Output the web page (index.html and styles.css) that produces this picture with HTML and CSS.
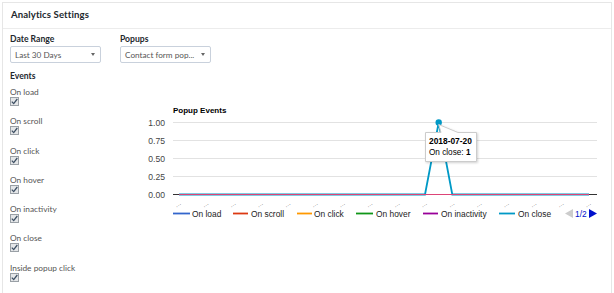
FILE: index.html
```html
<!DOCTYPE html>
<html lang="en">
<head>
<meta charset="utf-8">
<title>Analytics Settings</title>
<link rel="stylesheet" href="styles.css">
</head>
<body>
<div class="panel">
  <div class="panel-header"><h2 class="panel-title">Analytics Settings</h2></div>
  <div class="panel-body">
    <div class="filters">
      <div class="field">
        <div class="field-label">Date Range</div>
        <div class="select"><span class="select-text">Last 30 Days</span><i class="caret"></i></div>
      </div>
      <div class="field">
        <div class="field-label">Popups</div>
        <div class="select"><span class="select-text">Contact form pop...</span><i class="caret"></i></div>
      </div>
    </div>
    <div class="main">
      <div class="events">
        <div class="field-label">Events</div>
        <ul class="event-list">
          <li class="event"><span class="event-name">On load</span><span class="check"><svg viewBox="0 0 7 7" width="7" height="7"><path d="M0.8 3.6 L2.7 5.6 L6.3 1"/></svg></span></li>
          <li class="event"><span class="event-name">On scroll</span><span class="check"><svg viewBox="0 0 7 7" width="7" height="7"><path d="M0.8 3.6 L2.7 5.6 L6.3 1"/></svg></span></li>
          <li class="event"><span class="event-name">On click</span><span class="check"><svg viewBox="0 0 7 7" width="7" height="7"><path d="M0.8 3.6 L2.7 5.6 L6.3 1"/></svg></span></li>
          <li class="event"><span class="event-name">On hover</span><span class="check"><svg viewBox="0 0 7 7" width="7" height="7"><path d="M0.8 3.6 L2.7 5.6 L6.3 1"/></svg></span></li>
          <li class="event"><span class="event-name">On inactivity</span><span class="check"><svg viewBox="0 0 7 7" width="7" height="7"><path d="M0.8 3.6 L2.7 5.6 L6.3 1"/></svg></span></li>
          <li class="event"><span class="event-name">On close</span><span class="check"><svg viewBox="0 0 7 7" width="7" height="7"><path d="M0.8 3.6 L2.7 5.6 L6.3 1"/></svg></span></li>
          <li class="event"><span class="event-name">Inside popup click</span><span class="check"><svg viewBox="0 0 7 7" width="7" height="7"><path d="M0.8 3.6 L2.7 5.6 L6.3 1"/></svg></span></li>
        </ul>
      </div>
      <svg class="chart" width="470" height="160" viewBox="0 0 470 160">
        <defs>
          <filter id="tipShadow" x="-20%" y="-20%" width="140%" height="150%">
            <feDropShadow dx="1" dy="1" stdDeviation="1" flood-color="#000" flood-opacity="0.18"/>
          </filter>
        </defs>
        <text class="chart-title" x="33" y="43">Popup Events</text>
        <g class="grid">
          <line x1="33" y1="52.5" x2="457" y2="52.5"/>
          <line x1="33" y1="70.5" x2="457" y2="70.5"/>
          <line x1="33" y1="88.5" x2="457" y2="88.5"/>
          <line x1="33" y1="106.5" x2="457" y2="106.5"/>
        </g>
        <line class="axis" x1="33" y1="124.5" x2="457" y2="124.5"/>
        <g class="ylabels">
          <text x="25" y="55.5">1.00</text>
          <text x="25" y="73.5">0.75</text>
          <text x="25" y="91.5">0.50</text>
          <text x="25" y="109.5">0.25</text>
          <text x="25" y="127.5">0.00</text>
        </g>
        <g class="series">
          <line x1="39" y1="124.5" x2="449" y2="124.5" stroke="#3366cc"/>
          <line x1="39" y1="124.5" x2="449" y2="124.5" stroke="#dc3912"/>
          <line x1="39" y1="124.5" x2="449" y2="124.5" stroke="#ff9900"/>
          <line x1="39" y1="124.5" x2="449" y2="124.5" stroke="#109618"/>
          <line x1="39" y1="124.5" x2="449" y2="124.5" stroke="#990099"/>
          <polyline points="39,124.5 285,124.5 298.7,52.5 312.3,124.5 449,124.5" stroke="#0099c6" fill="none"/>
          <line x1="39" y1="124.5" x2="449" y2="124.5" stroke="#dd4477"/>
        </g>
        <circle cx="298.7" cy="52.5" r="3.2" fill="#0099c6"/>
        <g class="xlabels">
          <text transform="translate(39 136) rotate(-35)">…</text>
          <text transform="translate(66.3 136) rotate(-35)">…</text>
          <text transform="translate(93.7 136) rotate(-35)">…</text>
          <text transform="translate(121 136) rotate(-35)">…</text>
          <text transform="translate(148.3 136) rotate(-35)">…</text>
          <text transform="translate(175.7 136) rotate(-35)">…</text>
          <text transform="translate(203 136) rotate(-35)">…</text>
          <text transform="translate(230.3 136) rotate(-35)">…</text>
          <text transform="translate(257.7 136) rotate(-35)">…</text>
          <text transform="translate(285 136) rotate(-35)">…</text>
          <text transform="translate(312.3 136) rotate(-35)">…</text>
          <text transform="translate(339.7 136) rotate(-35)">…</text>
          <text transform="translate(367 136) rotate(-35)">…</text>
          <text transform="translate(394.3 136) rotate(-35)">…</text>
          <text transform="translate(421.7 136) rotate(-35)">…</text>
          <text transform="translate(449 136) rotate(-35)">…</text>
        </g>
        <g class="legend">
          <line x1="33" y1="143.5" x2="50" y2="143.5" stroke="#3366cc"/>
          <text x="52" y="147">On load</text>
          <line x1="93" y1="143.5" x2="108" y2="143.5" stroke="#dc3912"/>
          <text x="111" y="147">On scroll</text>
          <line x1="157" y1="143.5" x2="172" y2="143.5" stroke="#ff9900"/>
          <text x="174" y="147">On click</text>
          <line x1="216" y1="143.5" x2="233" y2="143.5" stroke="#109618"/>
          <text x="236" y="147">On hover</text>
          <line x1="283" y1="143.5" x2="298" y2="143.5" stroke="#990099"/>
          <text x="301" y="147">On inactivity</text>
          <line x1="359" y1="143.5" x2="375" y2="143.5" stroke="#0099c6"/>
          <text x="378" y="147">On close</text>
          <path class="pager-off" d="M425 143.5 L433 139 L433 148 Z"/>
          <text class="pager-text" x="435" y="147">1/2</text>
          <path class="pager-on" d="M457 143.5 L449 139 L449 148 Z"/>
        </g>
        <g class="tooltip">
          <path class="tip-box" d="M285.5 62.5 L301 62.5 L298.7 54.5 L318 62.5 L336.5 62.5 L336.5 91.5 L285.5 91.5 Z"/>
          <text class="tip-title" x="289" y="73.5">2018-07-20</text>
          <text class="tip-line" x="289" y="84.5">On close: <tspan class="tip-value">1</tspan></text>
        </g>
      </svg>
    </div>
  </div>
</div>
</body>
</html>
```

FILE: styles.css
```css
* { box-sizing: border-box; }
html, body { margin: 0; padding: 0; background: #fff; }
body { font-family: Lato, "Open Sans", sans-serif; color: #333; }

.panel {
  margin: 2px 0 0 2px;
  width: 610px;
  height: 291px;
  overflow: hidden;
  border: 1px solid #e6e6e6;
  border-bottom: none;
}
.panel-header {
  height: 26px;
  border-bottom: 1px solid #ececec;
  padding: 0 0 2px 8px;
}
.panel-title {
  margin: 0;
  font-size: 9.6px;
  font-weight: 700;
  line-height: 23px;
  letter-spacing: 0.1px;
  color: #23282d;
}
.panel-body { padding: 5px 0 0 7px; }

.filters { display: flex; gap: 19px; }
.field { width: 91px; }
.field-label {
  font-size: 8.6px;
  font-weight: 700;
  line-height: 10px;
  color: #23282d;
}
.select {
  margin-top: 2px;
  height: 17px;
  border: 1px solid #c9d1dc;
  border-radius: 2px;
  display: flex;
  align-items: center;
  justify-content: space-between;
  padding: 0 5px 0 4px;
}
.select-text { font-size: 8.2px; color: #555; white-space: nowrap; }
.caret {
  width: 0; height: 0;
  border-left: 2.5px solid transparent;
  border-right: 2.5px solid transparent;
  border-top: 3px solid #666;
}

.main { display: flex; margin-top: 7px; }
.events { width: 130px; padding-top: 1px; }
.event-list {
  list-style: none;
  margin: 6px 0 0;
  padding: 0;
  display: flex;
  flex-direction: column;
  gap: 10.3px;
}
.event { display: flex; flex-direction: column; align-items: flex-start; }
.event-name { font-size: 8.3px; line-height: 10px; color: #555; }
.check {
  width: 9px; height: 9px;
  border: 1px solid #9aa0a6;
  background: #e4e6e8;
  display: flex; align-items: center; justify-content: center;
}
.check svg { display: block; }
.check path { fill: none; stroke: #3d4f63; stroke-width: 1.3; }

.chart { display: block; font-family: "Liberation Sans", Arial, sans-serif; }
.chart-title { font-size: 8px; font-weight: 700; fill: #000; }
.grid line { stroke: #e2e2e2; stroke-width: 1; }
.axis { stroke: #333; stroke-width: 1; }
.ylabels text { font-size: 8.6px; fill: #444; text-anchor: end; }
.series line, .series polyline { stroke-width: 1; }
.series polyline { stroke-width: 1.8; }
.xlabels text { font-size: 6.5px; fill: #777; text-anchor: middle; }
.legend line { stroke-width: 1.8; }
.legend text { font-size: 8.4px; fill: #222; }
.pager-off { fill: #cccccc; }
.pager-on { fill: #0011cc; }
.legend .pager-text { fill: #0011cc; font-size: 8.4px; }
.tip-box { fill: #fff; stroke: #cccccc; stroke-width: 1; filter: url(#tipShadow); }
.tip-title { font-size: 8.4px; font-weight: 700; fill: #000; }
.tip-line { font-size: 8.2px; fill: #000; }
.tip-value { font-weight: 700; }
```
